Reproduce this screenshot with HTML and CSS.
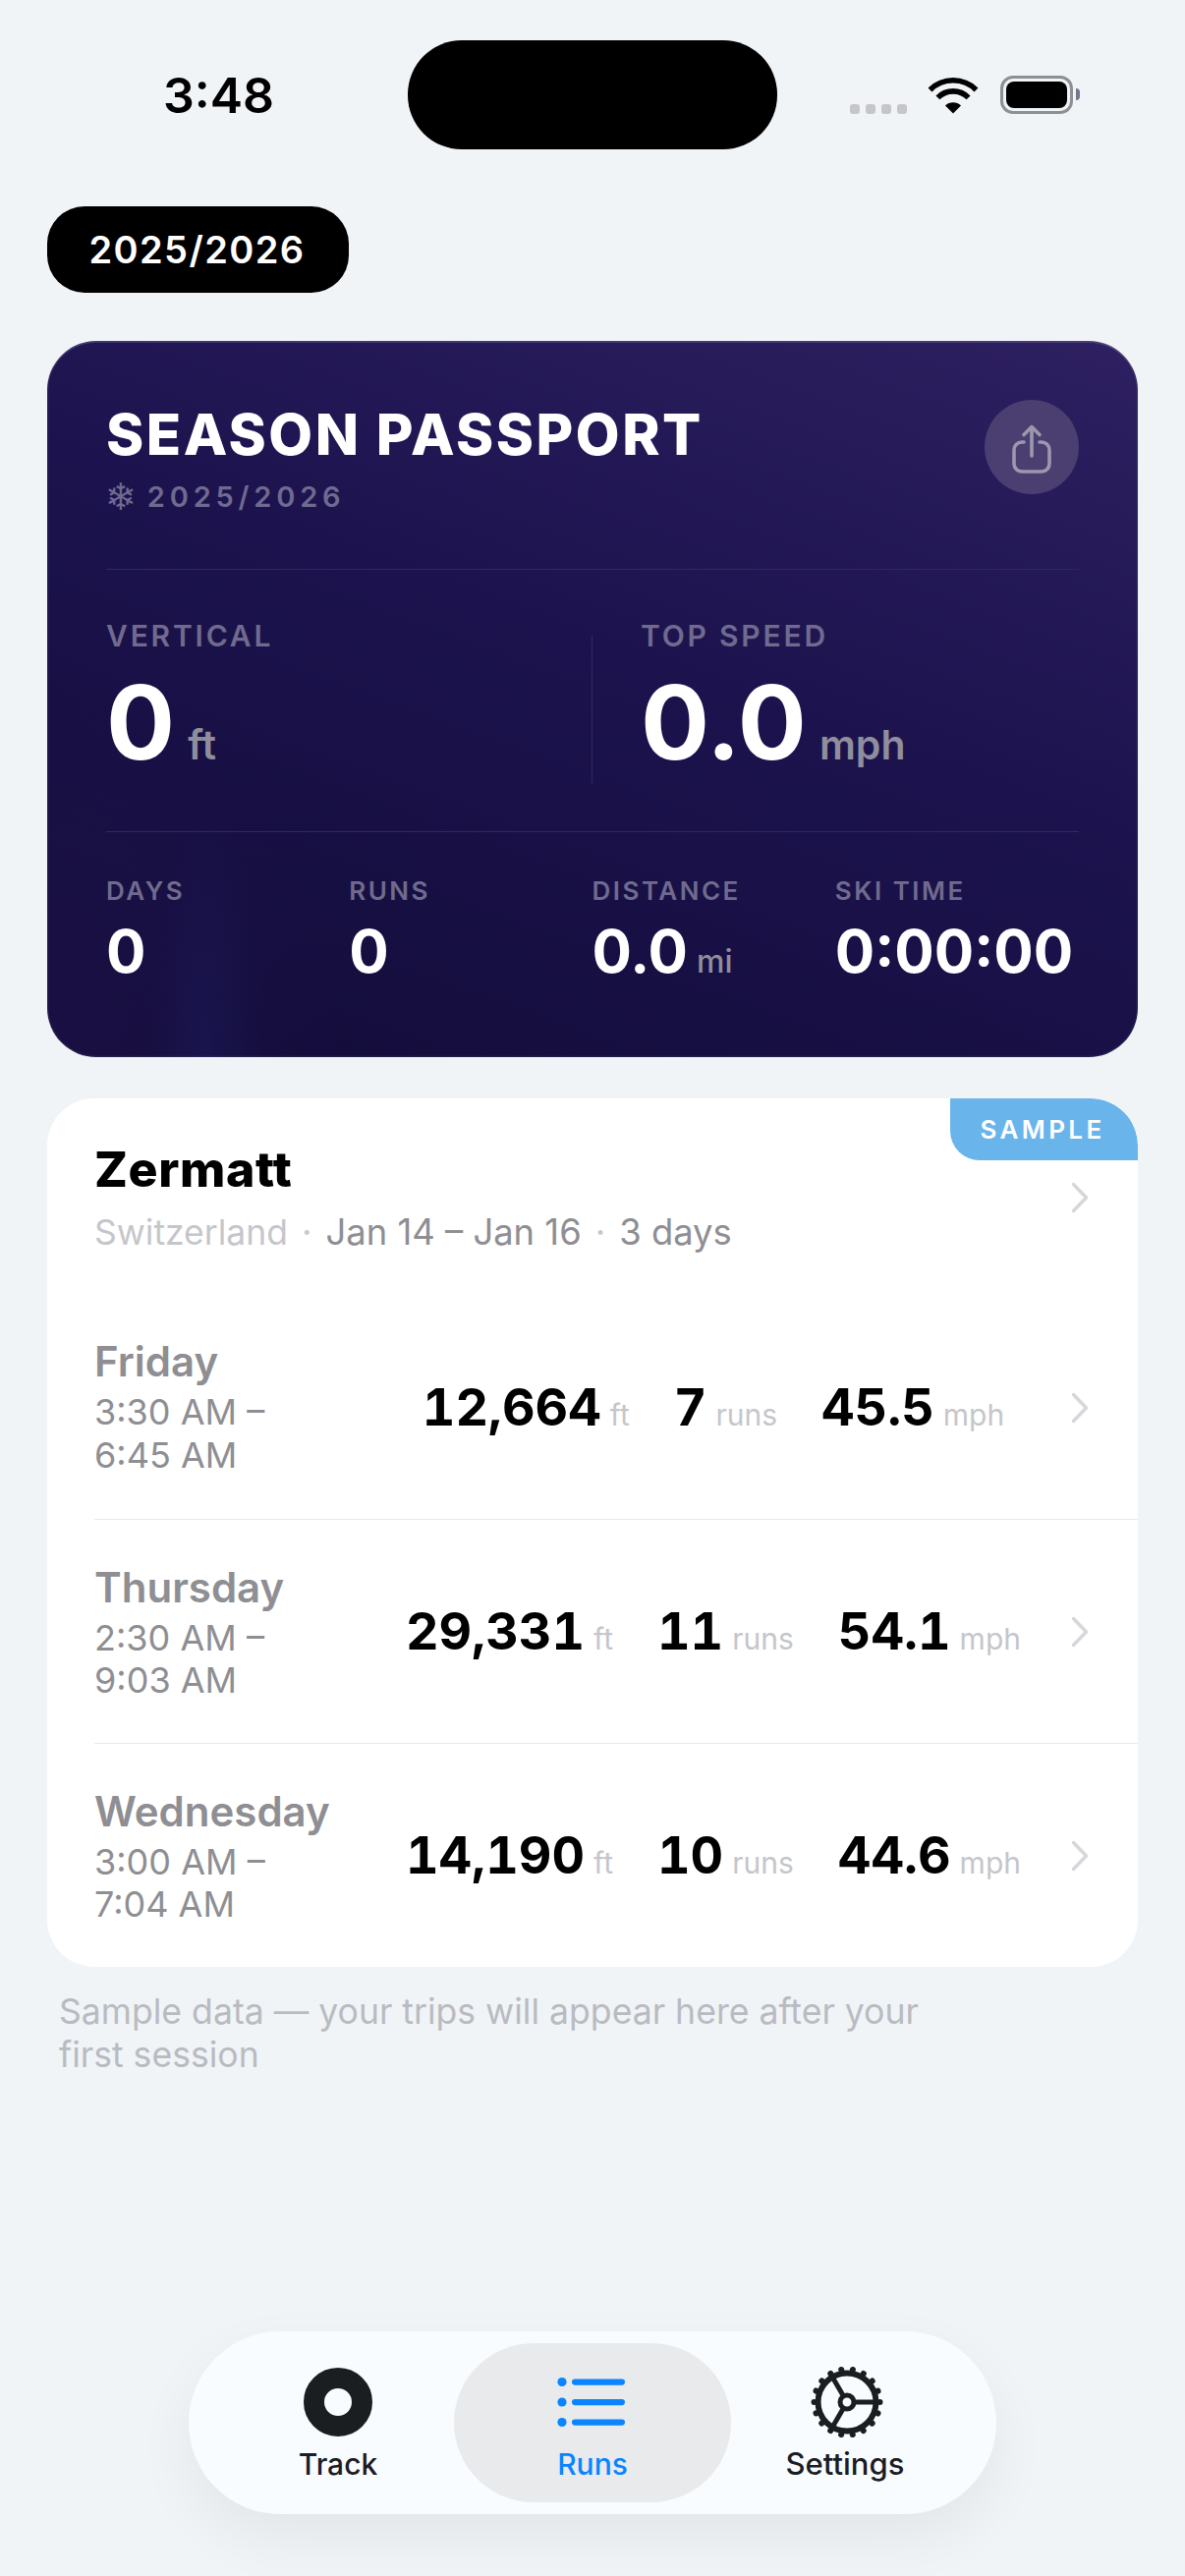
FILE: index.html
```html
<!DOCTYPE html>
<html lang="en">
<head>
    <meta charset="UTF-8">
    <meta name="viewport" content="width=device-width, initial-scale=1.0">
    <title>Runs</title>
    <link rel="stylesheet" href="styles.css">
</head>
<body>

    <div class="status-bar">
        <div class="status-time">3:48</div>
        <div class="island"></div>
        <div class="status-icons">
            <div class="signal"><span></span><span></span><span></span><span></span></div>
            <svg class="wifi" width="52" height="38" viewBox="0 0 52 38">
                <path d="M2.5 13.5A33.3 33.3 0 0 1 49.5 13.5" fill="none" stroke="#000" stroke-width="5.6"/>
                <path d="M10.4 21.4A22 22 0 0 1 41.6 21.4" fill="none" stroke="#000" stroke-width="5.6"/>
                <path d="M26 37.5L18 29.5A11.3 11.3 0 0 1 34 29.5Z" fill="#000"/>
            </svg>
            <div class="battery"><div class="battery-fill"></div></div>
            <div class="battery-tip"></div>
        </div>
    </div>

    <div class="season-pill">2025/2026</div>

    <div class="passport">
        <div class="passport-head">
            <div>
                <div class="passport-title">SEASON PASSPORT</div>
                <div class="passport-season"><span class="flake">❄</span>2025/2026</div>
            </div>
            <div class="share-button">
                <svg width="42" height="52" viewBox="0 0 42 52" fill="none" stroke="#9c98ae" stroke-width="3.6" stroke-linecap="round" stroke-linejoin="round">
                    <path d="M13 19H11A8 8 0 0 0 3 27V41A8 8 0 0 0 11 49H31A8 8 0 0 0 39 41V27A8 8 0 0 0 31 19H29"/>
                    <path d="M21 33V4"/>
                    <path d="M13 11.5L21 3.5L29 11.5"/>
                </svg>
            </div>
        </div>

        <div class="passport-main">
            <div class="main-stat">
                <div class="stat-label">VERTICAL</div>
                <div class="main-value">0<span class="main-unit">ft</span></div>
            </div>
            <div class="main-rule"></div>
            <div class="main-stat main-stat-right">
                <div class="stat-label">TOP SPEED</div>
                <div class="main-value">0.0<span class="main-unit">mph</span></div>
            </div>
        </div>

        <div class="passport-minor">
            <div>
                <div class="minor-label">DAYS</div>
                <div class="minor-value">0</div>
            </div>
            <div>
                <div class="minor-label">RUNS</div>
                <div class="minor-value">0</div>
            </div>
            <div>
                <div class="minor-label">DISTANCE</div>
                <div class="minor-value">0.0<span class="minor-unit">mi</span></div>
            </div>
            <div>
                <div class="minor-label">SKI TIME</div>
                <div class="minor-value">0:00:00</div>
            </div>
        </div>
    </div>

    <div class="trip-card">
        <div class="sample-badge">SAMPLE</div>

        <div class="trip-head">
            <div class="trip-info">
                <div class="trip-name">Zermatt</div>
                <div class="trip-meta">
                    <span class="trip-country">Switzerland</span><span class="meta-dot">·</span>Jan 14 – Jan 16<span class="meta-dot">·</span>3 days
                </div>
            </div>
            <svg class="chevron" width="18" height="32" viewBox="0 0 18 32"><path d="M2.5 2.5L15.5 16L2.5 29.5"/></svg>
        </div>

        <div class="day-row">
            <div class="day-info">
                <div class="day-name">Friday</div>
                <div class="day-time">3:30 AM –<br>6:45 AM</div>
            </div>
            <div class="day-stats">
                <div class="day-stat"><b>12,664</b><span>ft</span></div>
                <div class="day-stat"><b>7</b><span>runs</span></div>
                <div class="day-stat"><b>45.5</b><span>mph</span></div>
            </div>
            <svg class="chevron" width="18" height="32" viewBox="0 0 18 32"><path d="M2.5 2.5L15.5 16L2.5 29.5"/></svg>
        </div>

        <div class="day-row">
            <div class="day-info">
                <div class="day-name">Thursday</div>
                <div class="day-time">2:30 AM –<br>9:03 AM</div>
            </div>
            <div class="day-stats">
                <div class="day-stat"><b>29,331</b><span>ft</span></div>
                <div class="day-stat"><b>11</b><span>runs</span></div>
                <div class="day-stat"><b>54.1</b><span>mph</span></div>
            </div>
            <svg class="chevron" width="18" height="32" viewBox="0 0 18 32"><path d="M2.5 2.5L15.5 16L2.5 29.5"/></svg>
        </div>

        <div class="day-row">
            <div class="day-info">
                <div class="day-name">Wednesday</div>
                <div class="day-time">3:00 AM –<br>7:04 AM</div>
            </div>
            <div class="day-stats">
                <div class="day-stat"><b>14,190</b><span>ft</span></div>
                <div class="day-stat"><b>10</b><span>runs</span></div>
                <div class="day-stat"><b>44.6</b><span>mph</span></div>
            </div>
            <svg class="chevron" width="18" height="32" viewBox="0 0 18 32"><path d="M2.5 2.5L15.5 16L2.5 29.5"/></svg>
        </div>
    </div>

    <p class="sample-note">Sample data — your trips will appear here after your first session</p>

    <nav class="tab-bar">
        <div class="tab tab-track">
            <div class="tab-icon">
                <svg width="70" height="70" viewBox="0 0 70 70"><circle cx="35" cy="35" r="24.5" fill="none" stroke="#1a1e20" stroke-width="21"/></svg>
            </div>
            <div class="tab-label">Track</div>
        </div>
        <div class="tab tab-runs">
            <div class="tab-icon">
                <svg width="72" height="52" viewBox="0 0 72 52" fill="#0a84ff">
                    <circle cx="5" cy="5.5" r="4.6"/>
                    <circle cx="5" cy="26" r="4.6"/>
                    <circle cx="5" cy="46.5" r="4.6"/>
                    <rect x="15" y="2.5" width="54" height="6.2" rx="3.1"/>
                    <rect x="15" y="23" width="54" height="6.2" rx="3.1"/>
                    <rect x="15" y="43.5" width="54" height="6.2" rx="3.1"/>
                </svg>
            </div>
            <div class="tab-label">Runs</div>
        </div>
        <div class="tab tab-settings">
            <div class="tab-icon gear-icon">
                <svg width="76" height="76" viewBox="0 0 76 76" fill="none" stroke="#1a1e20">
                    <circle cx="38" cy="38" r="33.5" stroke-width="6" stroke-linecap="round" pathLength="18" stroke-dasharray="0.01 0.99"/>
                    <circle cx="38" cy="38" r="29.5" stroke-width="6"/>
                    <circle cx="38" cy="38" r="7" stroke-width="5"/>
                    <path d="M45 38H66M34.5 32L24 14M34.5 44L24 62" stroke-width="5"/>
                </svg>
            </div>
            <div class="tab-label">Settings</div>
        </div>
    </nav>

</body>
</html>
```

FILE: styles.css
```css
* {
    box-sizing: border-box;
}

body {
    font-family: 'Inter', 'Noto Sans', sans-serif;
    background-color: #f0f4f7;
    color: #000;
    margin: 0;
    width: 1206px;
    height: 2622px;
    overflow: hidden;
    display: flex;
    flex-direction: column;
}

/* status bar */
.status-bar {
    display: flex;
    align-items: center;
    height: 111px;
    margin-top: 41px;
    padding-left: 166px;
}

.status-time {
    width: 249px;
    font-size: 50px;
    font-weight: 600;
}

.island {
    width: 376px;
    height: 111px;
    background-color: #000;
    border-radius: 55px;
}

.status-icons {
    display: flex;
    align-items: flex-end;
    height: 39px;
    margin-left: 74px;
}

.signal {
    display: flex;
    gap: 6px;
    margin-right: 21px;
}

.signal span {
    width: 10px;
    height: 10px;
    background-color: #c6c6c8;
    border-radius: 3px;
}

.wifi {
    margin-right: 22px;
}

.battery {
    width: 74px;
    height: 39px;
    border: 3px solid #8e8e93;
    border-radius: 13px;
    padding: 3px;
}

.battery-fill {
    height: 100%;
    background-color: #000;
    border-radius: 8px;
}

.battery-tip {
    width: 4px;
    height: 12px;
    margin: 0 0 14px 3px;
    background-color: #77748c;
    border-radius: 0 4px 4px 0;
}

/* season switcher */
.season-pill {
    width: 307px;
    height: 88px;
    margin: 58px 0 0 48px;
    padding-right: 2px;
    background-color: #000;
    color: #fff;
    border-radius: 38px;
    font-size: 38px;
    font-weight: 600;
    letter-spacing: 1.4px;
    display: flex;
    align-items: center;
    justify-content: center;
}

/* passport card */
.passport {
    width: 1110px;
    height: 729px;
    margin: 49px 0 0 48px;
    padding: 0 60px 0 60px;
    border-radius: 50px;
    color: #fff;
    background:
        radial-gradient(60px 260px at 14.5% 100%, rgba(28, 36, 110, 0.3), transparent),
        radial-gradient(300px 380px at 0% 100%, rgba(50, 24, 96, 0.25), transparent),
        linear-gradient(200deg, #2e2061 0%, #1c134e 45%, #120c38 100%);
    box-shadow: inset 0 0 0 1.5px rgba(255, 255, 255, 0.06), inset 0 2px 0 rgba(255, 255, 255, 0.1);
}

.passport-head {
    display: flex;
    justify-content: space-between;
    align-items: flex-start;
    height: 233px;
    padding-top: 65px;
    border-bottom: 1px solid #32285f;
}

.passport-title {
    font-size: 58px;
    line-height: 60px;
    font-weight: 800;
    letter-spacing: 2.5px;
}

.passport-season {
    display: flex;
    align-items: center;
    margin-top: 16px;
    font-size: 29px;
    line-height: 36px;
    font-weight: 600;
    letter-spacing: 4.8px;
    color: #6f6a8f;
}

.flake {
    font-family: 'DejaVu Sans', sans-serif;
    font-size: 38px;
    letter-spacing: 0;
    margin: 0 11px 0 -1px;
}

.share-button {
    width: 96px;
    height: 96px;
    margin-top: -5px;
    padding-top: 3px;
    border-radius: 50%;
    background-color: #4a3f70;
    display: flex;
    align-items: center;
    justify-content: center;
}

.passport-main {
    display: flex;
    height: 267px;
    padding-top: 49px;
    border-bottom: 1px solid #32285f;
}

.main-stat {
    width: 494px;
}

.main-stat-right {
    width: auto;
    padding-left: 49px;
}

.main-rule {
    width: 1px;
    height: 150px;
    margin-top: 18px;
    background-color: #32285f;
}

.stat-label {
    font-size: 30px;
    line-height: 36px;
    font-weight: 600;
    letter-spacing: 2.8px;
    color: #706b8e;
}

.main-value {
    margin-top: 18px;
    font-size: 104px;
    line-height: 104px;
    font-weight: 700;
}

.main-unit {
    margin-left: 13px;
    font-size: 41px;
    font-weight: 600;
    color: #8f8e9c;
}

.passport-minor {
    display: grid;
    grid-template-columns: repeat(4, 247.25px);
    padding-top: 44px;
}

.minor-label {
    font-size: 26px;
    line-height: 32px;
    font-weight: 600;
    letter-spacing: 2.5px;
    color: #706b8e;
}

.minor-value {
    margin-top: 15px;
    font-size: 60px;
    line-height: 60px;
    font-weight: 700;
}

.minor-unit {
    margin-left: 9px;
    font-size: 32px;
    font-weight: 500;
    color: #8f8e9c;
}

/* trip card */
.trip-card {
    position: relative;
    width: 1110px;
    height: 884px;
    margin: 42px 0 0 48px;
    padding-left: 48px;
    background-color: #fff;
    border-radius: 48px;
    overflow: hidden;
}

.sample-badge {
    position: absolute;
    top: 0;
    right: 0;
    width: 191px;
    height: 63px;
    padding-right: 3px;
    background-color: #6ab4ec;
    color: #fff;
    border-radius: 0 48px 0 30px;
    font-size: 26px;
    font-weight: 600;
    letter-spacing: 3.4px;
    display: flex;
    align-items: center;
    justify-content: center;
}

.trip-head {
    display: flex;
    align-items: center;
    justify-content: space-between;
    height: 201px;
    padding-right: 50px;
}

.trip-name {
    font-size: 50px;
    line-height: 56px;
    font-weight: 800;
    letter-spacing: 0.6px;
    margin-top: 2px;
}

.trip-meta {
    margin-top: 14px;
    font-size: 36.4px;
    line-height: 44px;
    color: #8e8e93;
}

.trip-country {
    font-size: 35.5px;
    color: #c5c6cb;
}

.meta-dot {
    margin: 0 14px;
    color: #c8c8cc;
}

.chevron {
    flex-shrink: 0;
}

.chevron path {
    fill: none;
    stroke: #d6d7da;
    stroke-width: 3.5;
    stroke-linecap: round;
    stroke-linejoin: round;
}

.day-row {
    display: flex;
    align-items: center;
    height: 228px;
    padding-right: 50px;
    border-bottom: 1px solid #e8e9ec;
}

.day-row:last-child {
    height: 227px;
    border-bottom: none;
}

.day-info {
    width: 266px;
    flex-shrink: 0;
}

.day-row + .day-row .day-info {
    margin-top: 3px;
}

.day-name {
    font-size: 42px;
    line-height: 48px;
    font-weight: 600;
    color: #8e8e93;
}

.day-time {
    margin-top: 6px;
    font-size: 36px;
    line-height: 43.5px;
    color: #8e8e93;
}

.day-stats {
    flex: 1;
    display: flex;
    justify-content: center;
    gap: 45px;
}

.day-stat {
    display: flex;
    align-items: baseline;
    gap: 9px;
}

.day-stat b {
    font-size: 52px;
    font-weight: 700;
    font-variant-numeric: tabular-nums;
}

.day-stat span {
    font-size: 30px;
    color: #c5c6cb;
}

.sample-note {
    width: 930px;
    margin: 24px 0 0 60px;
    font-size: 35.6px;
    line-height: 43.5px;
    color: #b9bbc1;
}

/* floating tab bar */
.tab-bar {
    display: flex;
    width: 822px;
    height: 186px;
    margin: auto 0 63px 192px;
    padding: 12px 38px 12px 34px;
    background-color: #f9fcff;
    border-radius: 93px;
    box-shadow: 0 24px 60px rgba(0, 0, 0, 0.06);
}

.tab {
    display: flex;
    flex-direction: column;
    align-items: center;
    padding-top: 22px;
}

.tab-track {
    width: 236px;
}

.tab-runs {
    width: 282px;
    background-color: #e8eaec;
    border-radius: 81px;
}

.tab-settings {
    width: 232px;
}

.tab-icon {
    height: 76px;
    display: flex;
    align-items: center;
    justify-content: center;
}

.gear-icon {
    margin-left: 3px;
}

.tab-label {
    margin-top: 6px;
    font-size: 30px;
    line-height: 38px;
    font-weight: 500;
    color: #1c1c24;
}

.tab-settings .tab-label {
    font-size: 31px;
}

.tab-runs .tab-label {
    color: #0a84ff;
}
```
